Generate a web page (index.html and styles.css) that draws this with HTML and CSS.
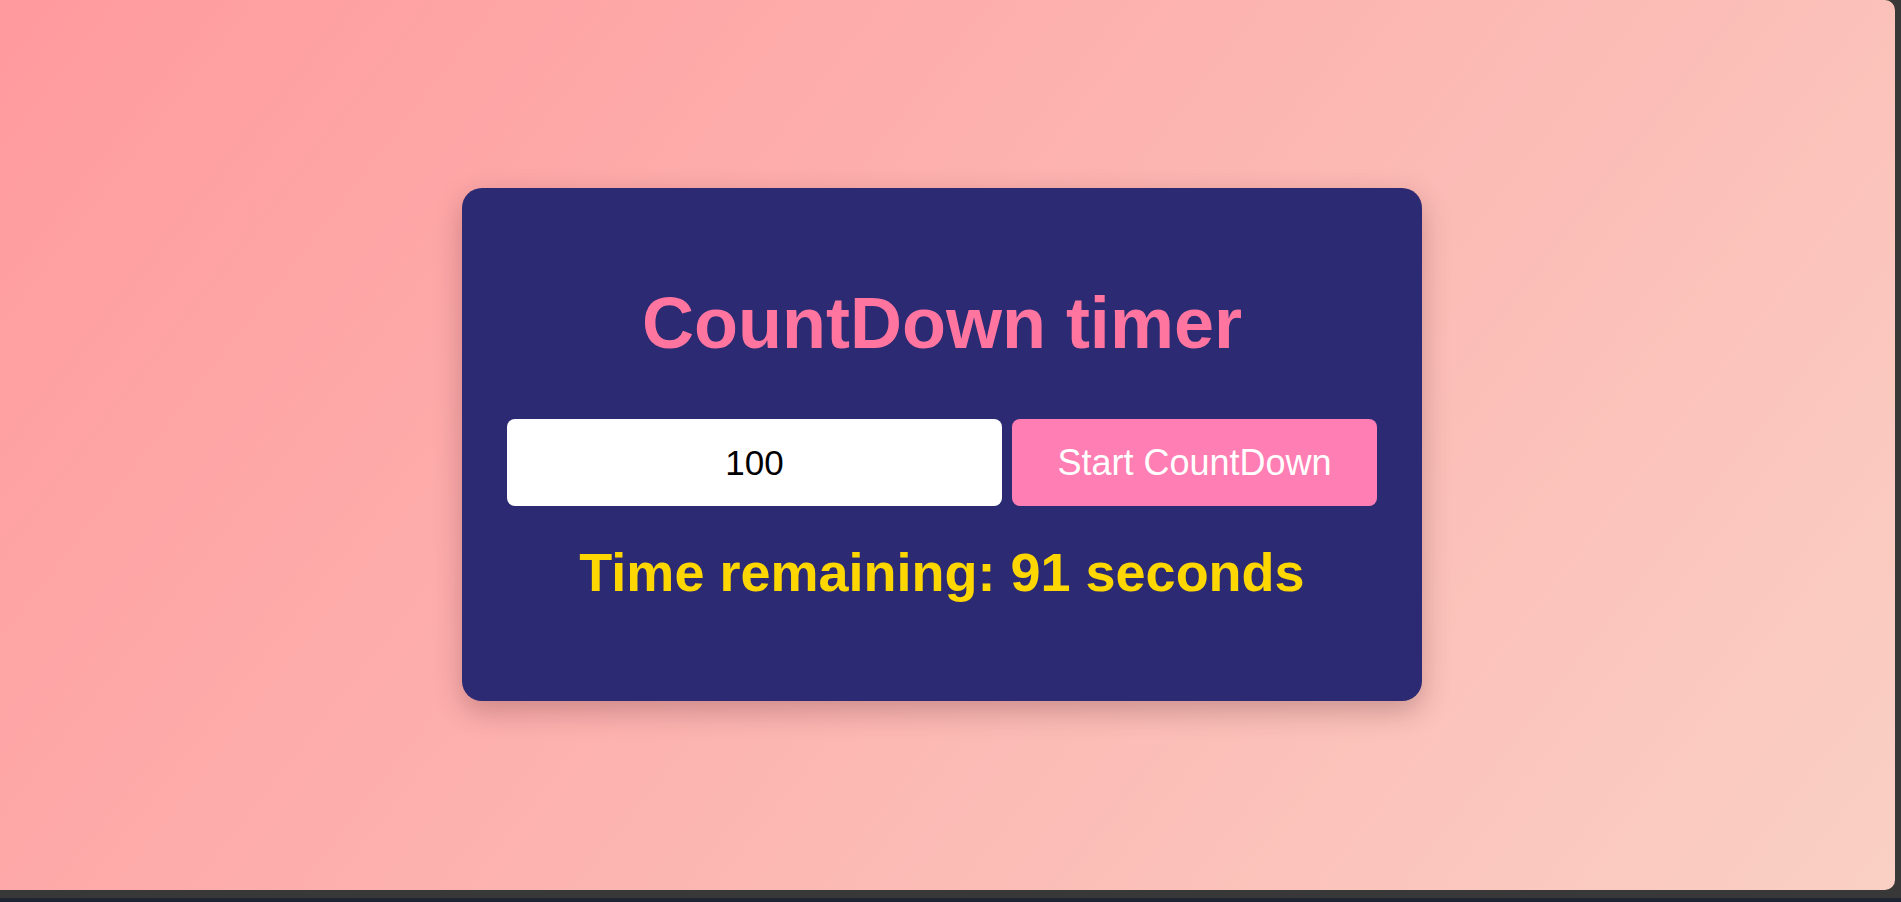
FILE: index.html
```html
<!DOCTYPE html>
<html lang="en">
<head>
<meta charset="utf-8">
<title>CountDown timer</title>
<link rel="stylesheet" href="styles.css">
</head>
<body>
<div class="desktop">
  <main class="window">
    <section class="card">
      <h1 class="title">CountDown timer</h1>
      <div class="controls">
        <input class="seconds" type="number" value="100">
        <button class="start" type="button">Start CountDown</button>
      </div>
      <p class="remaining">Time remaining: 91 seconds</p>
    </section>
  </main>
  <div class="strip"></div>
</div>
</body>
</html>
```

FILE: styles.css
```css
html, body {
  margin: 0;
  padding: 0;
}

body {
  width: 1901px;
  height: 902px;
  overflow: hidden;
  background: #383838;
  font-family: "Liberation Sans", Arial, sans-serif;
}

.desktop {
  display: flex;
  flex-direction: column;
  height: 902px;
}

.window {
  box-sizing: border-box;
  width: 1895px;
  height: 890px;
  flex: none;
  margin-bottom: 8px;
  border-radius: 0 10px 10px 0;
  background: linear-gradient(128deg, #ff9a9e 0%, #fad0c4 100%);
  display: flex;
  align-items: center;
  justify-content: center;
  padding-right: 11px;
  padding-bottom: 1px;
}

.strip {
  height: 4px;
  flex: none;
  background: #1f2533;
}

.card {
  box-sizing: border-box;
  width: 960px;
  height: 513px;
  background: #2b2a72;
  border-radius: 20px;
  padding: 94px 45px 0;
  box-shadow: 0 10px 28px rgba(80, 30, 40, 0.28);
  display: flex;
  flex-direction: column;
  align-items: center;
}

.title {
  margin: 0;
  font-size: 72px;
  font-weight: bold;
  line-height: 83px;
  color: #ff759f;
  text-align: center;
}

.controls {
  display: flex;
  gap: 10px;
  width: 100%;
  margin-top: 54px;
}

.seconds {
  box-sizing: border-box;
  width: 495px;
  height: 87px;
  border: none;
  border-radius: 8px;
  background: #ffffff;
  color: #000000;
  font-family: "Liberation Sans", Arial, sans-serif;
  font-size: 35px;
  text-align: center;
  padding: 0;
  outline: none;
  -moz-appearance: textfield;
}

.seconds::-webkit-outer-spin-button,
.seconds::-webkit-inner-spin-button {
  -webkit-appearance: none;
  margin: 0;
}

.start {
  box-sizing: border-box;
  flex: 1;
  height: 87px;
  border: none;
  border-radius: 8px;
  background: #ff7eb3;
  color: #ffffff;
  font-family: "Liberation Sans", Arial, sans-serif;
  font-size: 36px;
  padding: 0;
  cursor: pointer;
}

.remaining {
  margin: 35px 0 0;
  font-size: 54px;
  font-weight: bold;
  line-height: 62px;
  color: #ffd700;
  text-align: center;
}
```
